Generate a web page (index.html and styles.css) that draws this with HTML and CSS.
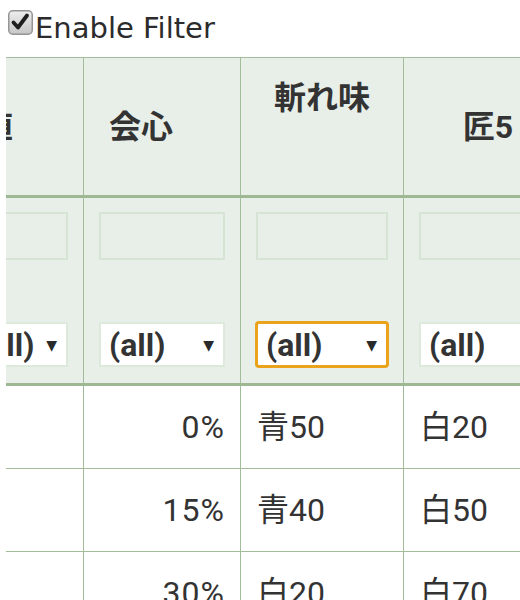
FILE: index.html
```html
<!DOCTYPE html>
<html lang="ja">
<head>
<meta charset="utf-8">
<title>Filter table</title>
<link rel="stylesheet" href="styles.css">
</head>
<body>
<label class="toggle">
  <span class="check">
    <svg width="25" height="25" viewBox="0 0 25 25" aria-hidden="true">
      <defs>
        <linearGradient id="cbg" x1="0" y1="0" x2="0" y2="1">
          <stop offset="0" stop-color="#eeeeee"/>
          <stop offset="1" stop-color="#c6c6c6"/>
        </linearGradient>
      </defs>
      <rect x="0.75" y="0.75" width="23.5" height="23.5" rx="4" ry="4" fill="url(#cbg)" stroke="#959595" stroke-width="1.5"/>
      <path d="M5.5 12.5 L10 17.5 L19 5.5" fill="none" stroke="#1f1f1f" stroke-width="3.8" stroke-linecap="round" stroke-linejoin="round"/>
    </svg>
  </span>
  <span class="toggle-text">Enable Filter</span>
</label>

<div class="scroller">
  <table class="grid">
    <colgroup>
      <col class="c-a">
      <col class="c-b">
      <col class="c-c">
      <col class="c-d">
    </colgroup>
    <thead>
      <tr class="head">
        <th><span>値</span><span class="sort"></span></th>
        <th><span>会心</span><span class="sort"></span></th>
        <th class="wrapped"><div>斬れ味</div><div class="sort-line"></div></th>
        <th><span>匠5</span><span class="sort"></span></th>
      </tr>
      <tr class="filters">
        <td>
          <div class="filter">
            <input class="text-input" type="text">
            <div class="select"><span>(all)</span><span class="arrow">▼</span></div>
          </div>
        </td>
        <td>
          <div class="filter">
            <input class="text-input" type="text">
            <div class="select"><span>(all)</span><span class="arrow">▼</span></div>
          </div>
        </td>
        <td>
          <div class="filter">
            <input class="text-input" type="text">
            <div class="select focused"><span>(all)</span><span class="arrow">▼</span></div>
          </div>
        </td>
        <td>
          <div class="filter">
            <input class="text-input" type="text">
            <div class="select"><span>(all)</span><span class="arrow">▼</span></div>
          </div>
        </td>
      </tr>
    </thead>
    <tbody>
      <tr><td></td><td class="num">0%</td><td>青50</td><td>白20</td></tr>
      <tr><td></td><td class="num">15%</td><td>青40</td><td>白50</td></tr>
      <tr><td></td><td class="num">30%</td><td>白20</td><td>白70</td></tr>
    </tbody>
  </table>
</div>
</body>
</html>
```
FILE: styles.css
```css
html {
  overflow: hidden;
}

body {
  margin: 0;
  background: #ffffff;
  color: #333333;
  font-family: Roboto, "Noto Sans CJK JP", sans-serif;
}

.toggle {
  display: flex;
  align-items: flex-start;
  gap: 2px;
  height: 57px;
  box-sizing: border-box;
  padding: 10px 0 0 8px;
}

.check {
  display: block;
  width: 25px;
  height: 25px;
}

.check svg {
  display: block;
}

.toggle-text {
  font-family: "DejaVu Sans", sans-serif;
  font-size: 29px;
  line-height: 34px;
  margin-top: 1px;
  color: #2b2b2b;
}

.scroller {
  margin-left: 6px;
  overflow: hidden;
}

.grid {
  border-collapse: collapse;
  table-layout: fixed;
  width: 662px;
  margin-left: -54px;
  font-size: 32px;
  color: #333333;
}

.c-a { width: 131px; }
.c-b { width: 157px; }
.c-c { width: 163px; }
.c-d { width: 211px; }

.grid th,
.grid td {
  border: 1px solid #a2bd9a;
  padding: 0;
}

.grid .head th {
  background: #e8eee8;
  font-weight: bold;
  text-align: center;
  vertical-align: middle;
  line-height: 38px;
  padding: 21px 15px;
  border-bottom: 3px solid #9db893;
  white-space: nowrap;
}

.sort {
  display: inline-block;
  width: 42px;
  height: 1px;
}

.sort-line {
  height: 57px;
}

.grid .filters td {
  background: #e8eee8;
  padding: 14px 15px 16px;
  border-bottom: 3px solid #9db893;
  vertical-align: top;
}

.filter {
  display: flex;
  flex-direction: column;
  gap: 62px;
}

.text-input {
  display: block;
  width: 100%;
  height: 48px;
  box-sizing: border-box;
  margin: 0;
  padding: 0 8px;
  border: 2px solid #d6e4d3;
  background: transparent;
  font: inherit;
  outline: none;
}

.select {
  display: flex;
  align-items: center;
  justify-content: space-between;
  height: 45px;
  box-sizing: border-box;
  padding: 0 9px 0 8px;
  border: 2px solid #dde9da;
  background: #ffffff;
  font-weight: bold;
  font-size: 32px;
  line-height: 1;
  white-space: nowrap;
  overflow: hidden;
}

.select.focused {
  border-color: #eaa31a;
  box-shadow: 0 0 0 1px #eaa31a;
  border-radius: 3px;
}

.arrow {
  font-size: 14px;
  font-family: "DejaVu Sans", sans-serif;
  font-weight: normal;
  color: #2a2a2a;
}

.grid tbody td {
  background: #ffffff;
  line-height: 38px;
  padding: 22px 16px;
  white-space: nowrap;
  vertical-align: middle;
}

.grid tbody td.num {
  text-align: right;
  padding-right: 15px;
  letter-spacing: 1px;
}
```
